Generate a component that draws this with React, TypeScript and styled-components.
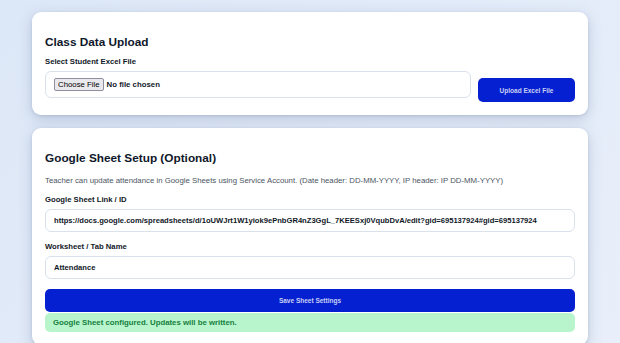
import styled, { createGlobalStyle } from "styled-components";

const GlobalStyle = createGlobalStyle`
  * { box-sizing: border-box; }
  html, body {
    margin: 0;
    padding: 0;
    font-family: "Liberation Sans", Arial, sans-serif;
    background: linear-gradient(135deg, #dce7f7 0%, #e4ecf9 60%, #e8effa 100%);
    min-height: 100vh;
  }
`;

const Page = styled.div`
  padding: 12px 32px 0;
  display: flex;
  flex-direction: column;
  gap: 13px;
`;

const Card = styled.div`
  background: #ffffff;
  border-radius: 9px;
  padding: 22px 13px 13px;
  box-shadow: 0 4px 14px rgba(90, 110, 150, 0.28), 0 1px 3px rgba(90, 110, 150, 0.2);
`;

const Title = styled.h2`
  margin: 0 0 5px;
  font-size: 11.8px;
  line-height: 17px;
  font-weight: 700;
  color: #0f172a;
`;

const Label = styled.label`
  display: block;
  font-size: 7.7px;
  line-height: 11px;
  font-weight: 700;
  color: #111827;
  margin-bottom: 4px;
`;

const Hint = styled.p`
  margin: 8px 0 8px;
  font-size: 7.8px;
  line-height: 11px;
  color: #4b5563;
`;

const UploadRow = styled.div`
  display: flex;
  align-items: flex-end;
  gap: 7px;
`;

const Field = styled.div<{ grow?: boolean }>`
  flex: ${({ grow }) => (grow ? 1 : "none")};
`;

const Box = styled.div`
  height: 27px;
  border: 1px solid #d9e1ec;
  border-radius: 6px;
  display: flex;
  align-items: center;
  padding: 0 8px;
  margin-bottom: 4px;
  font-size: 7.8px;
  font-weight: 700;
  color: #111827;
`;

const FileButton = styled.span`
  background: #e9e9ed;
  border: 1px solid #8f8f9d;
  border-radius: 2px;
  padding: 1px 3px;
  font-size: 7.8px;
  font-weight: 400;
  color: #000;
  margin-right: 3px;
`;

const TextInput = styled.input<{ last?: boolean }>`
  width: 100%;
  height: 23px;
  border: 1px solid #d9e1ec;
  border-radius: 6px;
  padding: 0 8px;
  font-family: inherit;
  font-size: 7.6px;
  font-weight: 700;
  color: #111827;
  outline: none;
  margin-bottom: ${({ last }) => (last ? "10px" : "9px")};
`;

const Button = styled.button<{ full?: boolean }>`
  width: ${({ full }) => (full ? "100%" : "97px")};
  height: ${({ full }) => (full ? "23px" : "24px")};
  border: none;
  border-radius: 5px;
  background: #0520d0;
  color: #c8d0f5;
  font-family: inherit;
  font-size: 6.5px;
  font-weight: 700;
  cursor: pointer;
`;

const Notice = styled.div`
  margin-top: 1px;
  height: 19px;
  border-radius: 5px;
  background: #b8f5cc;
  color: #15803d;
  font-size: 7.8px;
  font-weight: 700;
  display: flex;
  align-items: center;
  padding: 0 8px;
`;

export default function App() {
  return (
    <>
      <GlobalStyle />
      <Page>
        <Card>
          <Title>Class Data Upload</Title>
          <UploadRow>
            <Field grow>
              <Label>Select Student Excel File</Label>
              <Box>
                <FileButton>Choose File</FileButton>
                No file chosen
              </Box>
            </Field>
            <Button>Upload Excel File</Button>
          </UploadRow>
        </Card>
        <Card>
          <Title>Google Sheet Setup (Optional)</Title>
          <Hint>
            Teacher can update attendance in Google Sheets using Service Account. (Date header: DD-MM-YYYY, IP header: IP DD-MM-YYYY)
          </Hint>
          <Label>Google Sheet Link / ID</Label>
          <TextInput
            readOnly
            value="https://docs.google.com/spreadsheets/d/1oUWJrt1W1yiok9ePnbGR4nZ3GgL_7KEESxj0VqubDvA/edit?gid=695137924#gid=695137924"
          />
          <Label>Worksheet / Tab Name</Label>
          <TextInput readOnly last value="Attendance" />
          <Button full>Save Sheet Settings</Button>
          <Notice>Google Sheet configured. Updates will be written.</Notice>
        </Card>
      </Page>
    </>
  );
}
